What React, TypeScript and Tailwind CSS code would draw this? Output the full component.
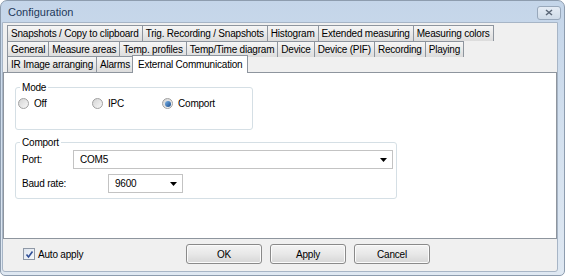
import React from "react";

const row1 = ["Snapshots / Copy to clipboard", "Trig. Recording / Snapshots", "Histogram", "Extended measuring", "Measuring colors"];
const row2 = ["General", "Measure areas", "Temp. profiles", "Temp/Time diagram", "Device", "Device (PIF)", "Recording", "Playing"];
const row3 = ["IR Image arranging", "Alarms"];

function Tab({ label }: { label: string }) {
  return (
    <div className="h-[16px] px-[3px] -ml-px first:ml-0 flex items-center border border-b-0 border-[#8e959e] bg-gradient-to-b from-[#f6f6f6] to-[#dcdcdc] text-[10px] leading-none tracking-[-0.2px] text-black whitespace-nowrap">
      {label}
    </div>
  );
}

function Radio({ label, checked }: { label: string; checked?: boolean }) {
  return (
    <div className="flex items-center gap-[5px] h-[13px]">
      <span className="w-[11px] h-[11px] rounded-full border border-[#a0a0a0] bg-gradient-to-br from-[#d4d4d4] to-[#f8f8f8] flex items-center justify-center">
        {checked && <span className="w-[6px] h-[6px] rounded-full bg-gradient-to-br from-[#7ab3e8] to-[#1a4c8c]" />}
      </span>
      <span>{label}</span>
    </div>
  );
}

function Combo({ value, className }: { value: string; className: string }) {
  return (
    <div className={`h-[19px] flex items-center justify-between border border-[#c3c3c3] bg-white pl-[6px] pr-[5px] ${className}`}>
      <span>{value}</span>
      <svg width="7" height="4" viewBox="0 0 7 4">
        <path d="M0 0h7L3.5 4z" fill="#000" />
      </svg>
    </div>
  );
}

function Button({ label }: { label: string }) {
  return (
    <div className="w-[76px] h-[20px] flex items-center justify-center rounded-[3px] border border-[#8a8a8a] bg-gradient-to-b from-[#f4f4f4] via-[#e8e8e8] to-[#d6d6d6] shadow-[inset_0_0_0_1px_#fbfbfb]">
      {label}
    </div>
  );
}

export default function App() {
  return (
    <div className="w-[567px] h-[278px] bg-white font-['Liberation_Sans',Arial,sans-serif] text-[10px] leading-[13px] tracking-[-0.2px] text-black">
      <div className="w-[565px] h-[276px] rounded-t-[7px] rounded-b-[5px] border border-[#8d9cae] bg-gradient-to-b from-[#c4d5e9] via-[#d4e1ef] to-[#dfe8f2] flex flex-col">
        <div className="h-[21px] flex items-center justify-between pl-[7px] pr-[3px]">
          <span className="text-[11px] tracking-normal text-[#1e395b] mt-[2px]">Configuration</span>
          <div className="w-[24px] h-[14px] mt-[2px] rounded-[3px] border border-[#98a8bb] bg-gradient-to-b from-[#e5ecf5] to-[#cfdbe8] flex items-center justify-center">
            <svg width="8" height="7" viewBox="0 0 8 7">
              <path d="M1 1l6 5M7 1L1 6" stroke="#5a6676" strokeWidth="1.5" />
            </svg>
          </div>
        </div>
        <div className="flex-1 ml-px mr-[6px] mb-[3px] border border-[#a7b5c6] rounded-b-[3px] bg-[#f0f0f0] flex flex-col">
          <div className="pt-[2px]">
            <div className="pl-[4px]">
              <div className="flex">{row1.map((t) => <Tab key={t} label={t} />)}</div>
              <div className="flex">{row2.map((t) => <Tab key={t} label={t} />)}</div>
              <div className="flex items-end h-[15px]">
                {row3.map((t) => <Tab key={t} label={t} />)}
                <div className="h-[18px] -ml-[2px] px-[5px] flex items-center border border-b-0 border-[#8e959e] bg-white relative z-10 -mb-px text-[10px] leading-none whitespace-nowrap">
                  External Communication
                </div>
              </div>
            </div>
            <div className="h-[167px] border border-[#8e959e] bg-white pl-[11px] pt-[8px]">
              <fieldset className="w-[238px] h-[49px] border border-[#d5dfe5] rounded-[3px] pl-[2px]">
                <legend className="px-[2px] ml-[2px]">Mode</legend>
                <div className="flex mt-[3px]">
                  <div className="w-[74px]"><Radio label="Off" /></div>
                  <div className="w-[70px]"><Radio label="IPC" /></div>
                  <Radio label="Comport" checked />
                </div>
              </fieldset>
              <fieldset className="mt-[6px] w-[382px] h-[63px] border border-[#d5dfe5] rounded-[3px] pl-[6px] pr-[3px]">
                <legend className="px-[2px] ml-[-2px]">Comport</legend>
                <div className="flex items-center mt-px">
                  <span className="w-[51px]">Port:</span>
                  <Combo value="COM5" className="flex-1" />
                </div>
                <div className="flex items-center mt-[5px]">
                  <span className="w-[86px]">Baud rate:</span>
                  <Combo value="9600" className="w-[75px]" />
                </div>
              </fieldset>
            </div>
          </div>
          <div className="flex-1 flex items-center pl-[20px] pb-[2px]">
            <div className="flex items-center gap-[3px] w-[163px]">
              <span className="w-[12px] h-[12px] border border-[#8f98a6] bg-gradient-to-br from-[#dde4ee] to-[#f7f9fb] flex items-center justify-center">
                <svg width="9" height="9" viewBox="0 0 9 9">
                  <path d="M1.5 4.5l2 2.5L7.5 1.5" stroke="#2f4e97" strokeWidth="1.6" fill="none" />
                </svg>
              </span>
              <span>Auto apply</span>
            </div>
            <div className="flex gap-[8px]">
              <Button label="OK" />
              <Button label="Apply" />
              <Button label="Cancel" />
            </div>
          </div>
        </div>
      </div>
    </div>
  );
}
